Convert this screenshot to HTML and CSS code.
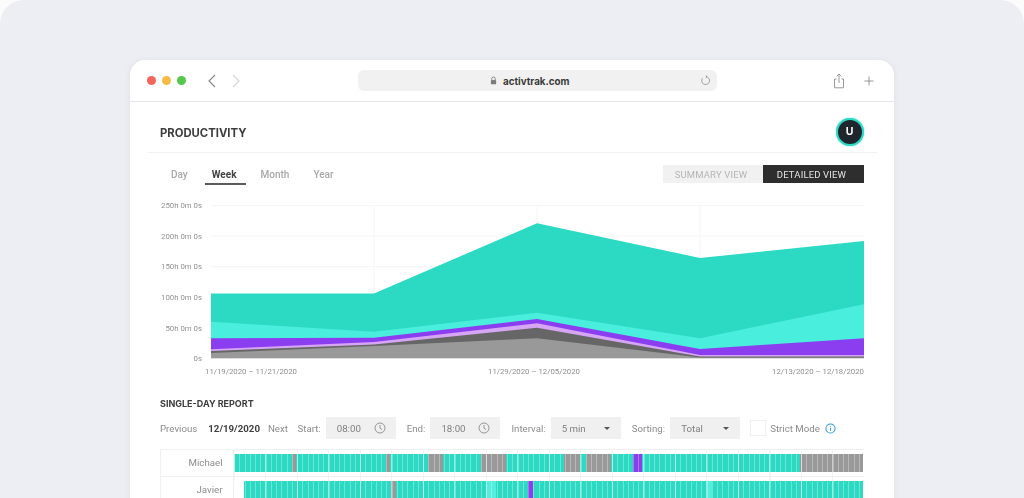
FILE: index.html
```html
<!DOCTYPE html>
<html lang="en">
<head>
<meta charset="utf-8">
<title>ActivTrak productivity</title>
<link rel="stylesheet" href="styles.css">
</head>
<body>
<div class="stage">
  <main class="window">
    <header class="browser">
      <div class="dots"><i class="dot red"></i><i class="dot amber"></i><i class="dot green"></i></div>
      <div class="nav">
        <svg class="chev" viewBox="0 0 8 14"><path d="M7 1 1 7l6 6"/></svg>
        <svg class="chev off" viewBox="0 0 8 14"><path d="M1 1l6 6-6 6"/></svg>
      </div>
      <div class="url">
        <svg class="lock" viewBox="0 0 8 10"><path class="shackle" d="M2 4.500V3a2 2 0 0 1 4 0v1.500"/><rect x="1" y="4.300" width="6" height="5" rx="1"/></svg>
        <span class="domain">activtrak.com</span>
        <svg class="reload" viewBox="0 0 12 12"><path d="M6.500 1.800a4.300 4.300 0 1 1-3.800 1.700M6.300 0.500 7.700 1.800 6.300 3.100"/></svg>
      </div>
      <div class="tools">
        <svg class="share" viewBox="0 0 12 16"><path d="M3.500 6H1.500v8.800h9V6H8.500M6 10V1M3.700 3.200 6 1l2.300 2.200"/></svg>
        <svg class="plus" viewBox="0 0 11 11"><path d="M5.500.5v10M.5 5.500h10"/></svg>
      </div>
    </header>
    <div class="content">
      <div class="head">
        <h1 class="title">PRODUCTIVITY</h1>
        <div class="avatar">U</div>
      </div>
      <div class="tabbar">
        <nav class="tabs">
          <span class="tab">Day</span>
          <span class="tab active">Week</span>
          <span class="tab">Month</span>
          <span class="tab">Year</span>
        </nav>
        <div class="toggle">
          <span class="view">SUMMARY VIEW</span>
          <span class="view on">DETAILED VIEW</span>
        </div>
      </div>
      <svg class="chart" viewBox="150 195 720 185">
        <g class="grid">
          <path d="M211 205.700H864M211 236H864M211 266.700H864M211 297H864M211 327.700H864"/>
          <path d="M374 207V358M537 207V358M700 207V358"/>
        </g>
        <g class="ylab">
          <text x="202" y="207.500">250h 0m 0s</text>
          <text x="202" y="238.500">200h 0m 0s</text>
          <text x="202" y="269">150h 0m 0s</text>
          <text x="202" y="300">100h 0m 0s</text>
          <text x="202" y="330.500">50h 0m 0s</text>
          <text x="202" y="361">0s</text>
        </g>
        <polygon fill="#2cdac4" points="211,293.500 374,293.500 537,223.300 700,258 864,241 864,358.500 211,358.500"/>
        <polygon fill="#4aeedd" points="211,321.700 374,331.700 537,312.700 700,338.300 864,304.300 864,358.500 211,358.500"/>
        <polygon fill="#8b3df0" points="211,338.300 374,337.700 537,319 700,349 864,338.300 864,358.500 211,358.500"/>
        <polygon fill="#d6a6f5" points="211,349.300 374,342 537,323.300 700,355 864,355 864,358.500 211,358.500"/>
        <polygon fill="#666" points="211,351 374,344.500 537,327.700 700,356.500 864,356.500 864,358.500 211,358.500"/>
        <polygon fill="#999" points="211,353 374,346 537,338.300 700,357.500 864,357.500 864,358.500 211,358.500"/>
        <path class="base" d="M211 358.500H864"/>
        <g class="xlab">
          <text x="205" y="373.500">11/19/2020 – 11/21/2020</text>
          <text x="488" y="373.500">11/29/2020 – 12/05/2020</text>
          <text x="864" y="374" text-anchor="end">12/13/2020 – 12/18/2020</text>
        </g>
      </svg>
      <h2 class="subtitle">SINGLE-DAY REPORT</h2>
      <div class="filters">
        <span class="prev">Previous</span>
        <b class="date">12/19/2020</b>
        <span class="next">Next</span>
        <span class="lab first">Start:</span>
        <div class="field">08:00
          <svg class="clock" viewBox="0 0 12 12"><circle cx="6" cy="6" r="5"/><path d="M6 3v3.300l2 1.200"/></svg>
        </div>
        <span class="lab">End:</span>
        <div class="field">18:00
          <svg class="clock" viewBox="0 0 12 12"><circle cx="6" cy="6" r="5"/><path d="M6 3v3.300l2 1.200"/></svg>
        </div>
        <span class="lab">Interval:</span>
        <div class="field select">5 min <i class="caret"></i></div>
        <span class="lab">Sorting:</span>
        <div class="field select">Total <i class="caret"></i></div>
        <span class="check"></span>
        <span class="strict">Strict Mode</span>
        <svg class="info" viewBox="0 0 12 12"><circle cx="6" cy="6" r="5"/><path d="M6 5.300v3.200M6 3.200v1"/></svg>
      </div>
      <div class="table">
        <div class="row">
          <div class="name">Michael</div>
          <div class="track">
            <div class="bar">
              <span class="seg teal" style="width:58px"></span><span class="seg gray" style="width:4.500px"></span>
              <span class="seg teal" style="width:90px"></span><span class="seg gray" style="width:4px"></span>
              <span class="seg teal" style="width:37.500px"></span><span class="seg gray" style="width:15.500px"></span>
              <span class="seg teal" style="width:37.500px"></span><span class="seg gray" style="width:25.500px"></span>
              <span class="seg teal" style="width:58px"></span><span class="seg gray" style="width:15.500px"></span>
              <span class="seg teal" style="width:6px"></span><span class="seg gray" style="width:25.500px"></span>
              <span class="seg teal" style="width:21.500px"></span><span class="seg purple" style="width:9.500px"></span>
              <span class="seg teal" style="width:158px"></span><span class="seg gray" style="width:63px"></span>
            </div>
          </div>
        </div>
        <div class="row">
          <div class="name">Javier</div>
          <div class="track">
            <div class="bar">
              <span class="seg blank" style="width:10.500px"></span>
              <span class="seg teal" style="width:147px"></span><span class="seg gray" style="width:4.500px"></span>
              <span class="seg teal" style="width:90.500px"></span><span class="seg light" style="width:10px"></span>
              <span class="seg teal" style="width:32px"></span><span class="seg purple" style="width:5px"></span>
              <span class="seg teal" style="width:174px"></span><span class="seg light" style="width:5px"></span>
              <span class="seg teal" style="width:151px"></span>
            </div>
          </div>
        </div>
      </div>
    </div>
  </main>
</div>
</body>
</html>
```
FILE: styles.css
```css
* { box-sizing: border-box; }
html, body { margin: 0; height: 498px; overflow: hidden; background: #fbfbfc; }
body { font-family: Roboto, "Liberation Sans", sans-serif; color: #888; }
.stage { height: 560px; padding: 60px 130px 0; background: #eceef3; border-radius: 24px; }
.window { width: 764px; height: 520px; background: #fff; border-radius: 15px; box-shadow: 0 1px 6px rgba(120,125,140,.12); filter: blur(.35px); }
.browser { height: 42px; display: flex; align-items: center; border-bottom: 1px solid #e6e6e6; padding-left: 17px; }
.dots { display: flex; gap: 6px; }
.dot { width: 9px; height: 9px; border-radius: 50%; }
.red { background: #f5655d; }
.amber { background: #f7bb45; }
.green { background: #55c84b; }
.nav { display: flex; gap: 16px; margin-left: 22px; }
.chev { width: 8px; height: 14px; fill: none; stroke: #8a8a8a; stroke-width: 1.200; }
.chev.off { stroke: #d8d8d8; }
.url { width: 359px; height: 21px; margin-left: 118px; border-radius: 6px; background: #f1f1f1; display: flex; align-items: center; padding-left: 132px; }
.lock { width: 7px; height: 9px; fill: #7d7d7d; }
.shackle { fill: none; stroke: #7d7d7d; stroke-width: 1; }
.domain { margin-left: 6px; padding-top: 1px; font: 700 9.800px Inter, "Liberation Sans", sans-serif; color: #3a3a3a; }
.reload { width: 11px; height: 11px; margin-left: 130px; fill: none; stroke: #8f8f8f; stroke-width: .9; }
.tools { display: flex; align-items: center; gap: 19px; margin-left: 116px; }
.share { width: 12px; height: 16px; fill: none; stroke: #8e8e8e; stroke-width: .9; }
.plus { width: 10px; height: 10px; fill: none; stroke: #8e8e8e; stroke-width: 1; }

.content { padding: 0 30px; }
.head { height: 51px; margin: 0 -14px 0 -12px; padding: 10px 14.500px 0 12px; border-bottom: 1px solid #f1f1f1; display: flex; align-items: center; justify-content: space-between; }
.title { margin: 0; padding-top: 1px; font: 700 11.300px Inter, "Liberation Sans", sans-serif; color: #3d3d3d; }
.avatar { width: 28px; height: 28px; border-radius: 50%; background: #20262e; border: 2.500px solid #2cdac4; box-shadow: 0 0 1.500px #2cdac4; color: #fff; font: 700 10.500px/23px Inter, "Liberation Sans", sans-serif; text-align: center; }
.tabbar { height: 42px; display: flex; align-items: flex-start; justify-content: space-between; }
.tabs { display: flex; padding-left: 11px; padding-top: 16px; }
.tab { font-size: 10px; font-weight: 500; color: #a8a8a8; height: 16px; line-height: 11px; margin-right: 24px; position: relative; }
.tab.active { color: #444; font-weight: 700; }
.tab.active::after { content: ""; position: absolute; left: -7px; right: -9px; bottom: 0; height: 2px; background: #5a5a5a; }
.toggle { display: flex; margin-top: 12px; height: 18px; }
.view { width: 100px; padding-right: 4px; font-size: 9.500px; line-height: 19px; text-align: center; background: #f1f1f1; color: #b5b5b5; letter-spacing: .15px; }
.view.on { width: 101px; background: #2e2e2e; color: #e4e4e4; }

.chart { display: block; width: 720px; height: 185px; margin-left: -10px; overflow: visible; }
.grid path { fill: none; stroke: #f4f4f4; stroke-width: 1; }
.ylab text { font-size: 7.800px; fill: #909090; text-anchor: end; font-family: Roboto, sans-serif; }
.xlab text { font-size: 7.800px; fill: #8e8e8e; font-family: Roboto, sans-serif; }
.base { stroke: #ddd; stroke-width: 1; fill: none; }

.subtitle { margin: 18px 0 0; font: 700 9px/12px Inter, "Liberation Sans", sans-serif; color: #3d3d3d; height: 12px; }
.filters { margin-top: 7px; height: 22px; display: flex; align-items: center; font-size: 9.700px; color: #8c8c8c; white-space: nowrap; }
.date { margin-left: 11px; color: #3f3f3f; font-weight: 700; }
.next { margin-left: 8px; }
.lab { margin-left: 11px; }
.lab.first { margin-left: 9.500px; }
.field { width: 70px; height: 22px; margin-left: 5px; padding: 0 10px 0 11px; background: #f0f0f0; display: flex; align-items: center; justify-content: space-between; color: #808080; }
.select { padding-right: 11px; }
.clock { width: 12px; height: 12px; fill: none; stroke: #8c8c8c; stroke-width: .9; }
.caret { width: 0; height: 0; border: 3px solid transparent; border-top: 3px solid #555; border-bottom: 0; }
.check { width: 16px; height: 16px; margin-left: 10px; background: #fff; border: 1px solid #f0f0f0; }
.strict { margin-left: 4px; }
.info { width: 11px; height: 11px; margin-left: 5px; fill: none; stroke: #2f9ae0; stroke-width: 1.100; }

.table { margin-top: 10px; border-left: 1px solid #f0f0f0; }
.row { display: flex; height: 28px; border-top: 1px solid #f0f0f0; border-bottom: 1px solid #f0f0f0; margin-bottom: -1px; }
.name { width: 72.500px; border-right: 1px solid #f0f0f0; font-size: 9.700px; line-height: 26px; text-align: right; padding-right: 10px; color: #8c8c8c; }
.track { flex: 1; padding: 3.500px 0 0; background: repeating-linear-gradient(90deg, #f4f4f4 0 1px, transparent 1px 31.500px); }
.bar { display: flex; height: 18.500px; width: 630px; position: relative; }
.bar::after { content: ""; position: absolute; inset: 0; background: repeating-linear-gradient(90deg, rgba(255,255,255,.5) 0 1px, transparent 1px 31.500px), repeating-linear-gradient(90deg, rgba(255,255,255,.3) 0 1px, transparent 1px 5.250px); }
.seg { display: block; height: 100%; flex: none; }
.teal { background: #2cdac4; }
.gray { background: #999; }
.purple { background: #8b3df0; }
.light { background: #52efdf; }
.blank { background: #fff; }
```
